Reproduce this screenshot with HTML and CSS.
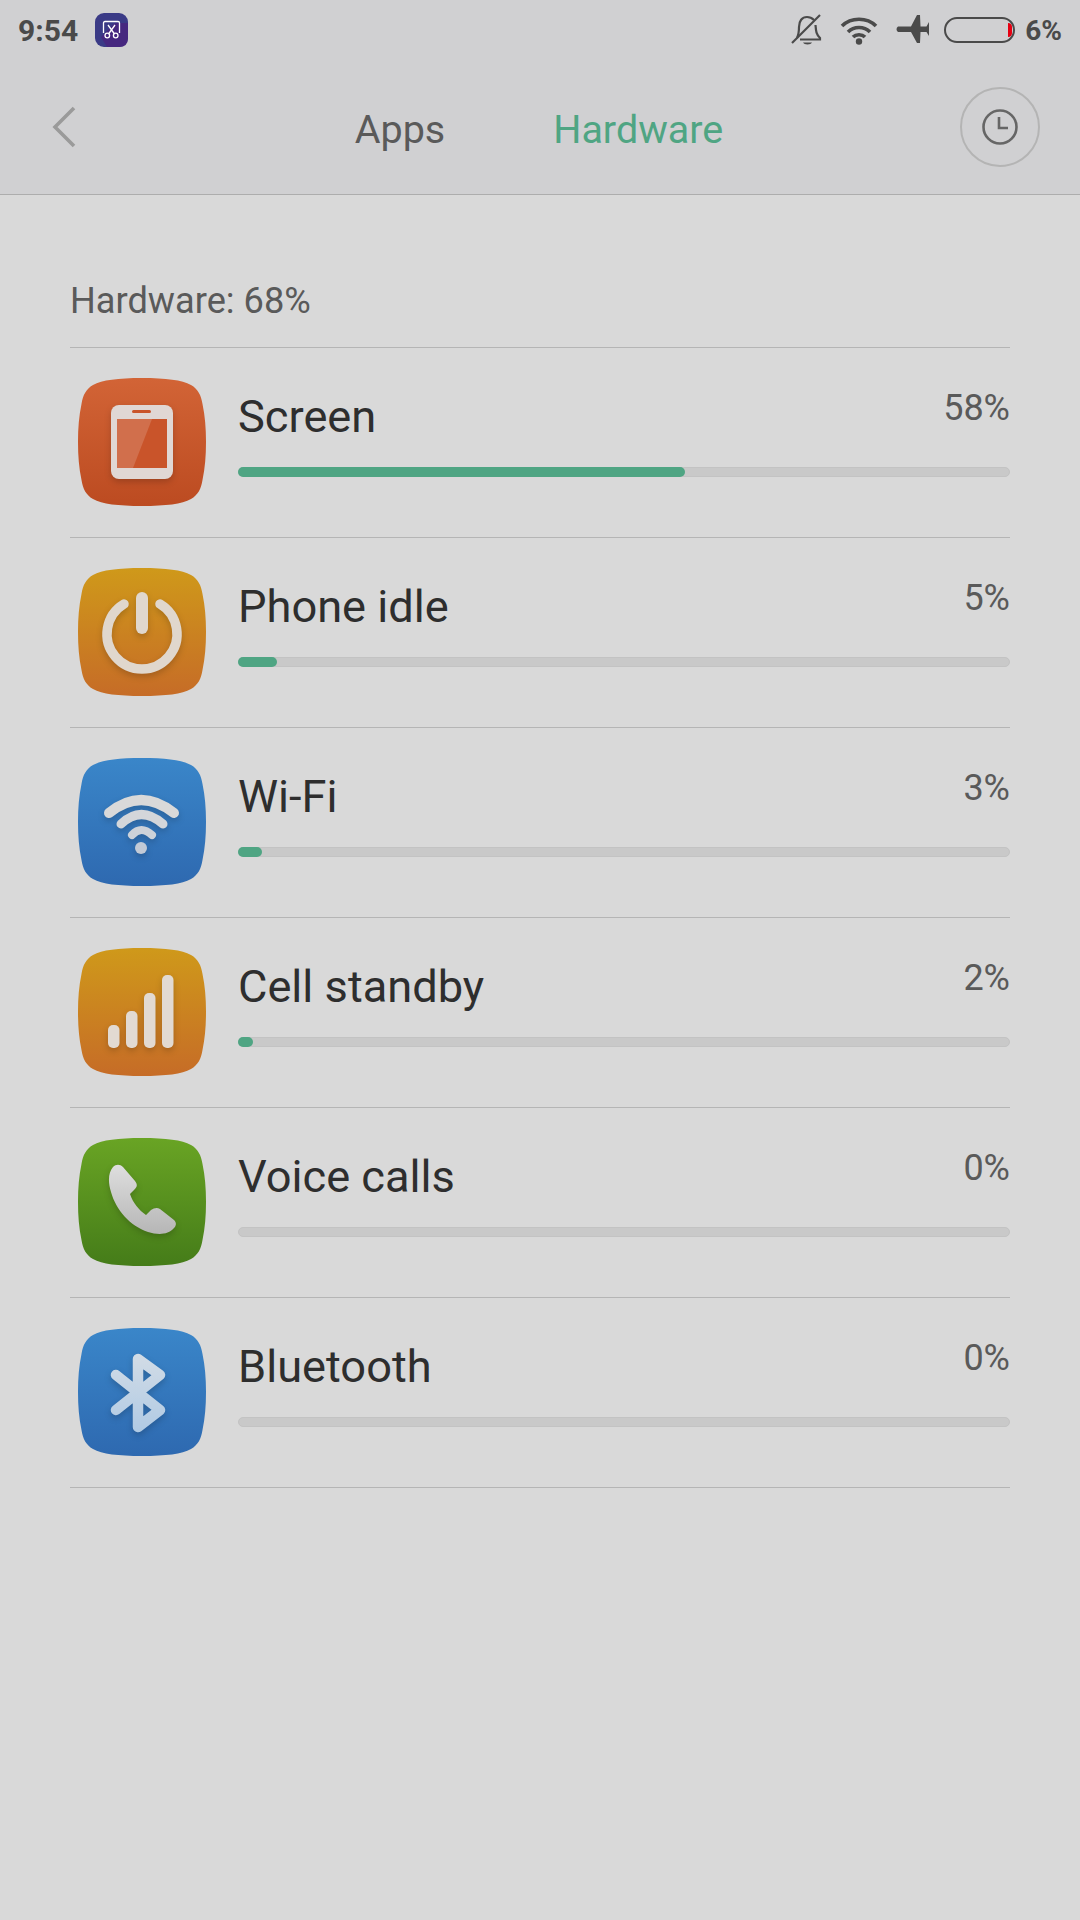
FILE: index.html
```html
<!DOCTYPE html>
<html lang="en">
<head>
    <meta charset="UTF-8">
    <title>Hardware</title>
    <link rel="stylesheet" href="styles.css">
</head>
<body>
    <svg class="defs" width="0" height="0">
        <defs>
            <path id="squircle" d="M64 0C88 0 104 2 113 7C120 11 123 17 124.500 26C127 38 128 50 128 64C128 78 127 90 124.500 102C123 111 120 117 113 121C104 126 88 128 64 128C40 128 24 126 15 121C8 117 5 111 3.500 102C1 90 0 78 0 64C0 50 1 38 3.500 26C5 17 8 11 15 7C24 2 40 0 64 0Z"/>
            <linearGradient id="grad-red" x1="0" y1="0" x2="0" y2="1"><stop offset="0" stop-color="#d26436"/><stop offset="1" stop-color="#bc4b21"/></linearGradient>
            <linearGradient id="grad-orange" x1="0" y1="0" x2="0" y2="1"><stop offset="0" stop-color="#cf991a"/><stop offset="1" stop-color="#c66c27"/></linearGradient>
            <linearGradient id="grad-blue" x1="0" y1="0" x2="0" y2="1"><stop offset="0" stop-color="#3a86c9"/><stop offset="1" stop-color="#2e69b0"/></linearGradient>
            <linearGradient id="grad-green" x1="0" y1="0" x2="0" y2="1"><stop offset="0" stop-color="#69a424"/><stop offset="1" stop-color="#457c19"/></linearGradient>
            <linearGradient id="grad-handset" x1="0" y1="0" x2="0" y2="1"><stop offset="0" stop-color="#dedede"/><stop offset="1" stop-color="#b6b6b6"/></linearGradient>
            <linearGradient id="grad-bt" gradientUnits="userSpaceOnUse" x1="0" y1="26" x2="0" y2="104"><stop offset="0" stop-color="#d2dce6"/><stop offset="1" stop-color="#b0cae4"/></linearGradient>
        </defs>
    </svg>

    <header class="top">
        <div class="status">
            <div class="status-left">
                <span class="clock-text">9:54</span>
                <svg class="app-badge" viewBox="0 0 33 34">
                    <rect width="33" height="34" rx="9" fill="#3a3a86"/>
                    <path d="M33 10V25Q33 34 24 34H12L6 24L20 10Z" fill="#46277f"/>
                    <path d="M8.500 20V10Q8.500 8.500 10 8.500H23Q24.500 8.500 24.500 10V20" fill="none" stroke="#fff" stroke-width="1.300"/>
                    <path d="M13 12L19.500 21M20 12L13.500 21" fill="none" stroke="#fff" stroke-width="1.300"/>
                    <circle cx="12.300" cy="22.500" r="2.300" fill="none" stroke="#fff" stroke-width="1.300"/>
                    <circle cx="20.700" cy="22.500" r="2.300" fill="none" stroke="#fff" stroke-width="1.300"/>
                </svg>
            </div>
            <div class="status-right">
                <svg class="st-bell" viewBox="0 0 32 32">
                    <path d="M6 24C8 20 8 17 8 13C8 7 11 3 16 3C19 3 21 4 23 6M24.500 11C25 17 25 20 29 24V25.500H9" fill="none" stroke="#4a4a4a" stroke-width="2.200"/>
                    <path d="M12 28.500H21C20 31 13 31 12 28.500Z" fill="#4a4a4a"/>
                    <path d="M1 29L29 1" stroke="#4a4a4a" stroke-width="2.200"/>
                </svg>
                <svg class="st-wifi" viewBox="0 0 38 30">
                    <path d="M2 11C11 2 27 2 36 11M8 17C14 11 24 11 30 17M13 22C16 19 22 19 25 22" fill="none" stroke="#4a4a4a" stroke-width="3.600"/>
                    <circle cx="19" cy="26.500" r="3.200" fill="#4a4a4a"/>
                </svg>
                <svg class="st-plane" viewBox="0 0 33 30">
                    <path d="M2 11.500H15L21 0H24L24.500 11.500H30.500L33 7V21L30.500 17H24.500L24 28H21L15 17H2Q-1 14.200 2 11.500Z" fill="#4a4a4a"/>
                </svg>
                <div class="battery"><span class="battery-level"></span></div>
                <span class="battery-text">6%</span>
            </div>
        </div>
        <nav class="nav">
            <svg class="back" viewBox="0 0 24 42">
                <path d="M22 2L3 21L22 40" fill="none" stroke="#9a9a9a" stroke-width="3.600"/>
            </svg>
            <div class="tabs">
                <span class="tab">Apps</span>
                <span class="tab tab-active">Hardware</span>
            </div>
            <div class="history-btn">
                <svg viewBox="0 0 38 38" class="history-icon">
                    <circle cx="19" cy="19" r="16.500" fill="none" stroke="#666" stroke-width="2.600"/>
                    <path d="M18 9V20H27" fill="none" stroke="#666" stroke-width="2.600"/>
                </svg>
            </div>
        </nav>
    </header>

    <main class="content">
        <div class="section-label">Hardware: 68%</div>
        <ul class="usage-list">
            <li class="usage-row">
                <svg class="usage-icon" viewBox="0 0 128 128">
                    <use href="#squircle" fill="url(#grad-red)"/>
                    <g class="glyph">
                        <rect x="33" y="27" width="62" height="74" rx="8" fill="#e0d7d4"/>
                        <rect x="39" y="41" width="50" height="49" fill="#c9542a"/>
                        <path d="M39 41H74L55 90H39Z" fill="#fff" fill-opacity=".16"/>
                        <rect x="54" y="32" width="19" height="3" rx="1.500" fill="#c9542a"/>
                    </g>
                </svg>
                <div class="usage-body">
                    <div class="usage-head"><span class="usage-name">Screen</span><span class="usage-pct">58%</span></div>
                    <div class="bar"><div class="bar-fill" style="width:58%"></div></div>
                </div>
            </li>
            <li class="usage-row">
                <svg class="usage-icon" viewBox="0 0 128 128">
                    <use href="#squircle" fill="url(#grad-orange)"/>
                    <g class="glyph">
                        <path d="M46 36A35 35 0 1 0 82 36" fill="none" stroke="#e0d7cd" stroke-width="9.500" stroke-linecap="round"/>
                        <rect x="58" y="24" width="12" height="42" rx="6" fill="#e0d7cd"/>
                    </g>
                </svg>
                <div class="usage-body">
                    <div class="usage-head"><span class="usage-name">Phone idle</span><span class="usage-pct">5%</span></div>
                    <div class="bar"><div class="bar-fill" style="width:5%"></div></div>
                </div>
            </li>
            <li class="usage-row">
                <svg class="usage-icon" viewBox="0 0 128 128">
                    <use href="#squircle" fill="url(#grad-blue)"/>
                    <g class="glyph" fill="none" stroke-linecap="round">
                        <path d="M31 55Q63 29 96 55" stroke="#d9d9d9" stroke-width="10"/>
                        <path d="M43 66Q63 47 85 66" stroke="#d3d6da" stroke-width="9"/>
                        <path d="M54 77Q63 67 74 77" stroke="#cdd2d9" stroke-width="8"/>
                        <circle cx="63" cy="90" r="6" fill="#c2cad6"/>
                    </g>
                </svg>
                <div class="usage-body">
                    <div class="usage-head"><span class="usage-name">Wi-Fi</span><span class="usage-pct">3%</span></div>
                    <div class="bar"><div class="bar-fill" style="width:3.100%"></div></div>
                </div>
            </li>
            <li class="usage-row">
                <svg class="usage-icon" viewBox="0 0 128 128">
                    <use href="#squircle" fill="url(#grad-orange)"/>
                    <g class="glyph" fill="#e2dad2">
                        <rect x="30" y="77" width="11.500" height="23" rx="5"/>
                        <rect x="48" y="63" width="11.500" height="37" rx="5"/>
                        <rect x="66" y="45" width="11.500" height="55" rx="5"/>
                        <rect x="84" y="27" width="11.500" height="73" rx="5"/>
                    </g>
                </svg>
                <div class="usage-body">
                    <div class="usage-head"><span class="usage-name">Cell standby</span><span class="usage-pct">2%</span></div>
                    <div class="bar"><div class="bar-fill" style="width:2%"></div></div>
                </div>
            </li>
            <li class="usage-row">
                <svg class="usage-icon" viewBox="0 0 128 128">
                    <use href="#squircle" fill="url(#grad-green)"/>
                    <g class="glyph">
                        <path d="M35 29C38 26 42 26 45 29L57 43C60 47 59 49 56 52L52 56C55 65 61 72 68 77L73 72C76 70 79 69 82 71L96 82C99 85 98 88 96 90C90 97 80 97 70 94C52 88 38 72 33 54C30 44 30 35 35 29Z" fill="url(#grad-handset)"/>
                    </g>
                </svg>
                <div class="usage-body">
                    <div class="usage-head"><span class="usage-name">Voice calls</span><span class="usage-pct">0%</span></div>
                    <div class="bar"></div>
                </div>
            </li>
            <li class="usage-row">
                <svg class="usage-icon" viewBox="0 0 128 128">
                    <use href="#squircle" fill="url(#grad-blue)"/>
                    <g class="glyph">
                        <path d="M38 47L82 82L60 99V31L82 47L38 82" fill="none" stroke="url(#grad-bt)" stroke-width="10.500" stroke-linecap="round" stroke-linejoin="round"/>
                    </g>
                </svg>
                <div class="usage-body">
                    <div class="usage-head"><span class="usage-name">Bluetooth</span><span class="usage-pct">0%</span></div>
                    <div class="bar"></div>
                </div>
            </li>
        </ul>
    </main>
</body>
</html>
```

FILE: styles.css
```css
* {
    box-sizing: border-box;
}
html, body {
    height: 100%;
}
body {
    margin: 0;
    background: #d9d9d9;
    font-family: Roboto, "Liberation Sans", sans-serif;
    overflow: hidden;
}
.defs {
    display: block;
    height: 0;
}

/* top bar */
.top {
    height: 195px;
    background: #d0d0d2;
    border-bottom: 1px solid #adadad;
}
.status {
    height: 60px;
    padding: 0 18px;
    display: flex;
    justify-content: space-between;
    align-items: center;
}
.status-left, .status-right {
    display: flex;
    align-items: center;
}
.clock-text {
    font-size: 30px;
    font-weight: 700;
    color: #4a4a4a;
}
.app-badge {
    width: 33px;
    height: 34px;
    margin-left: 17px;
}
.st-bell {
    width: 32px;
    height: 32px;
}
.st-wifi {
    width: 38px;
    height: 30px;
    margin-left: 17px;
}
.st-plane {
    width: 33px;
    height: 30px;
    margin-left: 18px;
}
.battery {
    width: 71px;
    height: 26px;
    margin-left: 15px;
    border: 2px solid #4a4a4a;
    border-radius: 13px;
    position: relative;
    overflow: hidden;
}
.battery-level {
    position: absolute;
    top: 4px;
    bottom: 4px;
    right: 1px;
    width: 4px;
    background: #e60012;
    border-radius: 0 4px 4px 0;
}
.battery-text {
    font-size: 28px;
    font-weight: 700;
    color: #4a4a4a;
    margin-left: 10px;
}
.nav {
    height: 134px;
    padding: 0 40px 0 52px;
    display: flex;
    justify-content: space-between;
    align-items: center;
}
.back {
    width: 24px;
    height: 42px;
}
.tabs {
    display: flex;
    gap: 108px;
    margin: 4px 0 0 42px;
}
.tab {
    font-size: 39.500px;
    color: #5a5a5a;
}
.tab-active {
    color: #4fa583;
}
.history-btn {
    width: 80px;
    height: 80px;
    border: 2px solid #b4b4b4;
    border-radius: 50%;
    display: flex;
    align-items: center;
    justify-content: center;
}
.history-icon {
    width: 38px;
    height: 38px;
}

/* list */
.content {
    padding: 0 70px;
}
.section-label {
    height: 153px;
    padding-top: 83px;
    font-size: 36.200px;
    line-height: 46px;
    color: #5a5a5a;
    border-bottom: 1px solid #b5b5b5;
}
.usage-list {
    list-style: none;
    margin: 0;
    padding: 0;
}
.usage-row {
    height: 190px;
    padding-left: 8px;
    display: flex;
    align-items: flex-start;
    border-bottom: 1px solid #b5b5b5;
}
.usage-icon {
    width: 128px;
    height: 128px;
    flex: none;
    margin-top: 30px;
}
.glyph {
    filter: drop-shadow(0 3px 3px rgba(0, 0, 0, .18));
}
.usage-body {
    flex: 1;
    margin-left: 32px;
    padding-top: 39px;
}
.usage-head {
    display: flex;
    justify-content: space-between;
    height: 60px;
}
.usage-name {
    font-size: 45.200px;
    line-height: 60px;
    color: #2e2e2e;
}
.usage-pct {
    font-size: 36px;
    line-height: 46px;
    margin-top: -2px;
    color: #5a5a5a;
}
.bar {
    height: 10px;
    margin-top: 20px;
    background: #c9c9c9;
    border: 1px solid #c3c3c3;
    border-radius: 5px;
}
.bar-fill {
    height: 10px;
    margin: -1px;
    background: #4fa583;
    border-radius: 5px;
}
```
